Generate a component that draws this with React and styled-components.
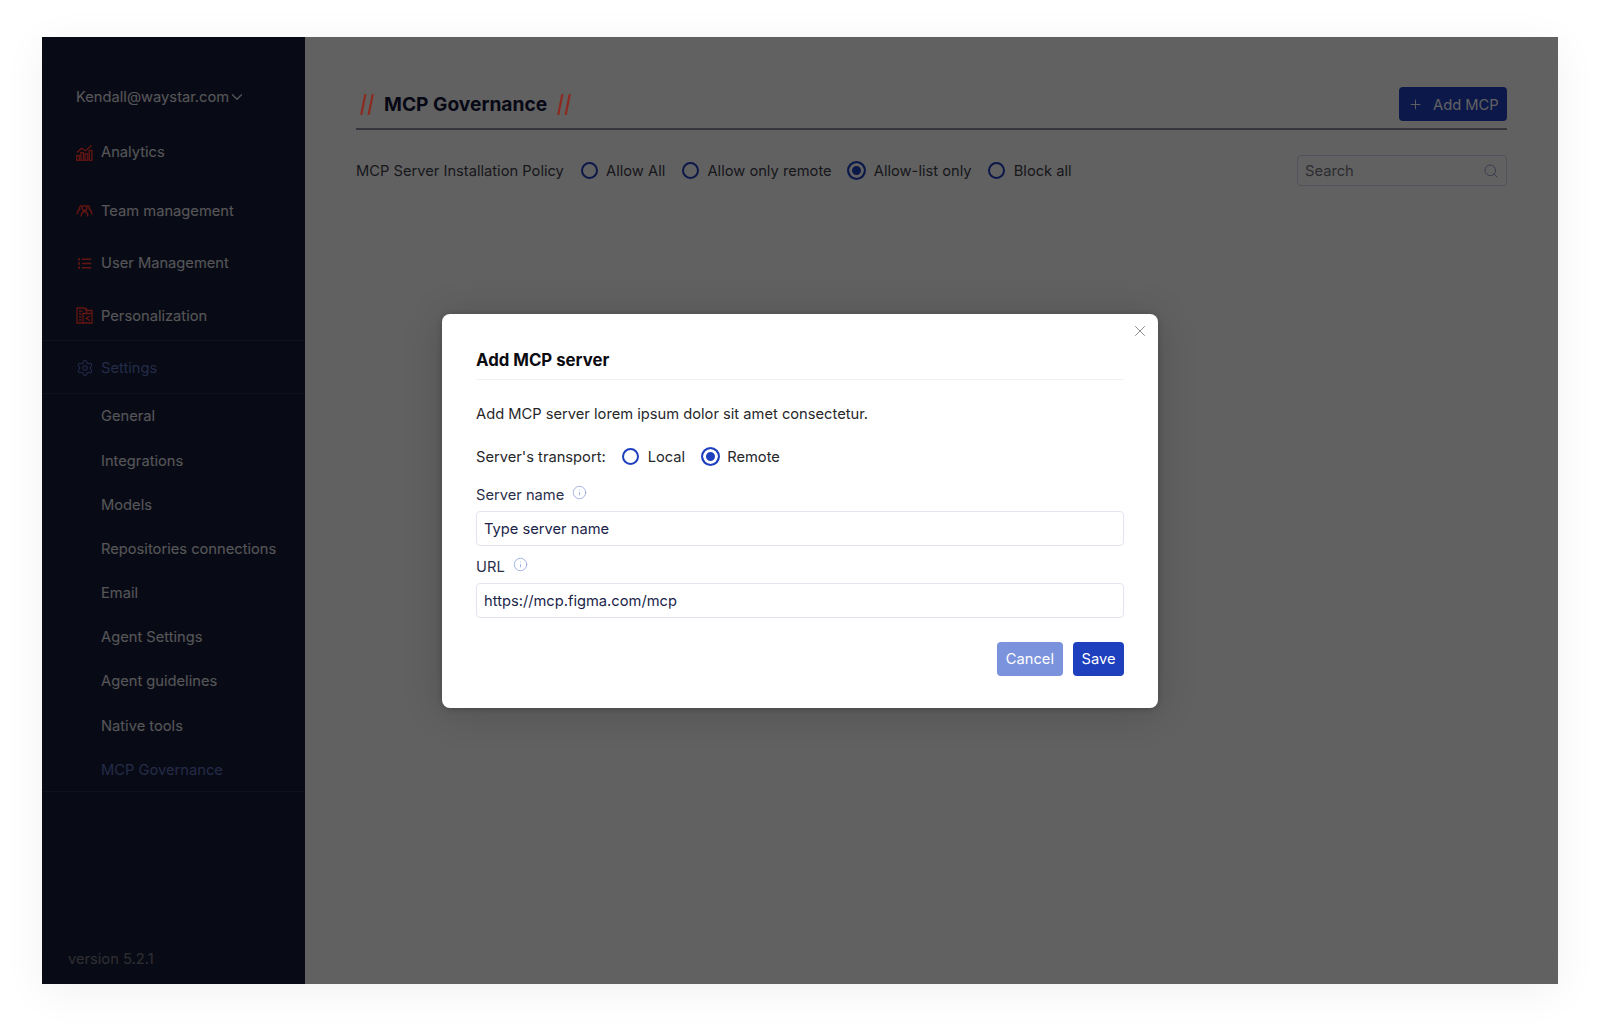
import React from 'react';
import styled, { createGlobalStyle } from 'styled-components';
import { ChevronDown, Info, Plus, Search, Settings, X } from 'lucide-react';

const GlobalStyle = createGlobalStyle`
  html, body {
    margin: 0;
    padding: 0;
    background: #fff;
  }
  body {
    font-family: Inter, "Liberation Sans", sans-serif;
    -webkit-font-smoothing: antialiased;
  }
`;

const AnalyticsIcon = () => (
  <svg width="17" height="17" viewBox="0 0 17 17" fill="none" stroke="currentColor" strokeWidth="1.3">
    <rect x="0.7" y="11.5" width="2.6" height="4.8" />
    <rect x="4.9" y="8.5" width="2.6" height="7.8" />
    <rect x="9.1" y="9.8" width="2.6" height="6.5" />
    <rect x="13.3" y="6.5" width="2.6" height="9.8" />
    <path d="M0.8 8.5 5.5 4.4 9.8 6.8 15.8 1.2" />
  </svg>
);

const TeamIcon = () => (
  <svg width="17" height="17" viewBox="0 0 17 17" fill="none" stroke="currentColor" strokeWidth="1.4">
    <circle cx="8.5" cy="6" r="2.4" />
    <path d="M5.2 14.5c0-3 1.2-5 3.3-5s3.3 2 3.3 5" />
    <path d="M6 3.6A2.2 2.2 0 0 0 3.8 6.8C2.3 7.8 1.4 10 1.1 12.5" />
    <path d="M11 3.6a2.2 2.2 0 0 1 2.2 3.2c1.5 1 2.4 3.2 2.7 5.7" />
  </svg>
);

const ListIcon = () => (
  <svg width="17" height="17" viewBox="0 0 17 17" fill="none" stroke="currentColor" strokeWidth="1.5">
    <path d="M5.8 4.3h9.4M5.8 8.5h9.4M5.8 12.7h9.4" />
    <path d="M2.2 4.3h1.8M2.2 8.5h1.8M2.2 12.7h1.8" strokeWidth="2.3" />
  </svg>
);

const PersonalizationIcon = () => (
  <svg width="17" height="17" viewBox="0 0 17 17" fill="none" stroke="currentColor" strokeWidth="1.3">
    <path d="M7 16H1V1h7.5l2 2.5V6" />
    <path d="M10.5 1v2.5h5.5V16H7V6.5h9" />
    <path d="M3 4.2h3.5M3 7h2.4M3 10h2.4M3 13h2.4" />
    <path d="M13.8 9 10 11.2l3.8 2.4" />
  </svg>
);

const SlashMark = () => (
  <svg width="14" height="21" viewBox="0 0 14 21" fill="none" stroke="currentColor" strokeWidth="2.2">
    <path d="M1.2 21 5.4 0M8.6 21 12.8 0" />
  </svg>
);

const topItems = [
  { label: 'Analytics', icon: <AnalyticsIcon />, after: 6 },
  { label: 'Team management', icon: <TeamIcon /> },
  { label: 'User Management', icon: <ListIcon /> },
  { label: 'Personalization', icon: <PersonalizationIcon /> },
];

const subItems = [
  'General',
  'Integrations',
  'Models',
  'Repositories connections',
  'Email',
  'Agent Settings',
  'Agent guidelines',
  'Native tools',
  'MCP Governance',
];

const policies = [
  { label: 'Allow All' },
  { label: 'Allow only remote' },
  { label: 'Allow-list only', checked: true },
  { label: 'Block all' },
];

const App = () => {
  return (
    <>
      <GlobalStyle />
      <Page>
        <Frame>
          <Sidebar>
            <Account>
              Kendall@waystar.com
              <ChevronDown size={18} strokeWidth={1.6} />
            </Account>
            {topItems.map(item => (
              <NavItem key={item.label} $after={item.after}>
                <NavIcon>{item.icon}</NavIcon>
                {item.label}
              </NavItem>
            ))}
            <SettingsItem>
              <NavIcon $blue>
                <Settings size={18} strokeWidth={1.4} />
              </NavIcon>
              Settings
            </SettingsItem>
            <SubList>
              {subItems.map(item => (
                <SubItem key={item} $active={item === 'MCP Governance'}>
                  {item}
                </SubItem>
              ))}
            </SubList>
            <Version>version 5.2.1</Version>
          </Sidebar>

          <Main>
            <Header>
              <TitleGroup>
                <Slashes>
                  <SlashMark />
                </Slashes>
                <Title>MCP Governance</Title>
                <Slashes>
                  <SlashMark />
                </Slashes>
              </TitleGroup>
              <AddButton>
                <Plus size={15} strokeWidth={1.5} />
                Add MCP
              </AddButton>
            </Header>
            <PolicyRow>
              <span>MCP Server Installation Policy</span>
              {policies.map(policy => (
                <RadioOption key={policy.label}>
                  <Radio $checked={policy.checked} />
                  {policy.label}
                </RadioOption>
              ))}
              <SearchBox>
                Search
                <Search size={16} strokeWidth={1.4} />
              </SearchBox>
            </PolicyRow>
          </Main>

          <Overlay>
            <Modal>
              <CloseButton>
                <X size={18} strokeWidth={1.3} />
              </CloseButton>
              <ModalTitle>Add MCP server</ModalTitle>
              <Description>Add MCP server lorem ipsum dolor sit amet consectetur.</Description>
              <TransportRow>
                <span>Server's transport:</span>
                <RadioOption>
                  <Radio />
                  Local
                </RadioOption>
                <RadioOption>
                  <Radio $checked />
                  Remote
                </RadioOption>
              </TransportRow>
              <FieldLabel>
                Server name
                <Info size={15} strokeWidth={1.3} />
              </FieldLabel>
              <Input>Type server name</Input>
              <FieldLabel>
                URL
                <Info size={15} strokeWidth={1.3} />
              </FieldLabel>
              <Input>https://mcp.figma.com/mcp</Input>
              <Actions>
                <ModalButton $light>Cancel</ModalButton>
                <ModalButton>Save</ModalButton>
              </Actions>
            </Modal>
          </Overlay>
        </Frame>
      </Page>
    </>
  );
};

const Page = styled.div`
  height: 1031px;
  padding: 37px 42px 47px;
  box-sizing: border-box;
  background: #fff;
`;

const Frame = styled.div`
  position: relative;
  display: flex;
  height: 947px;
  background: #fff;
  box-shadow: 0 8px 40px rgba(0, 0, 0, 0.06);
  overflow: hidden;
`;

const Sidebar = styled.aside`
  display: flex;
  flex-direction: column;
  flex: 0 0 263px;
  padding-top: 38px;
  box-sizing: border-box;
  background: #171c38;
  color: #e2e2e8;
  font-size: 14.7px;
`;

const Account = styled.div`
  display: flex;
  align-items: center;
  height: 44px;
  margin-bottom: 6px;
  padding-left: 34px;
  svg {
    margin-left: -1px;
  }
`;

const NavItem = styled.div`
  display: flex;
  align-items: center;
  box-sizing: border-box;
  height: 52.5px;
  margin-bottom: ${props => props.$after || 0}px;
  padding: 1.5px 0 0 34px;
`;

// the red accents keep their strength under the dimming layer
const NavIcon = styled.span`
  position: relative;
  z-index: 2;
  display: flex;
  align-items: center;
  flex: 0 0 25px;
  color: ${props => (props.$blue ? '#232b4a' : '#651612')};
`;

const SettingsItem = styled(NavItem)`
  height: 54px;
  margin-top: -1px;
  border-top: 1px solid #2c3149;
  border-bottom: 1px solid #2c3149;
  color: #5d72bc;
`;

const SubList = styled.div`
  margin-top: -0.5px;
  border-bottom: 1px solid #2c3149;
`;

const SubItem = styled.div`
  display: flex;
  align-items: center;
  box-sizing: border-box;
  height: 44.2px;
  padding: 1.5px 0 0 59px;
  color: ${props => (props.$active ? '#5d72bc' : 'inherit')};
`;

const Version = styled.div`
  margin-top: auto;
  padding: 0 0 16px 26px;
  color: #7d7d84;
`;

const Main = styled.main`
  flex: 1;
  padding: 50px 51px 0 51px;
  background: #fff;
`;

const Header = styled.div`
  display: flex;
  align-items: center;
  justify-content: space-between;
  height: 34px;
  padding-bottom: 7px;
  border-bottom: 2px solid #8d8da3;
`;

const TitleGroup = styled.div`
  display: flex;
  align-items: center;
  gap: 10px;
  padding-left: 4px;
`;

const Slashes = styled.span`
  position: relative;
  z-index: 2;
  display: flex;
  color: #8c2a20;
`;

const Title = styled.h1`
  margin: 0;
  color: #14173a;
  font-size: 19.2px;
  font-weight: 700;
`;

const AddButton = styled.div`
  display: flex;
  align-items: center;
  gap: 10px;
  box-sizing: border-box;
  width: 108px;
  height: 34px;
  padding: 1px 0 0 9px;
  border-radius: 4px;
  background: #1e40bf;
  color: #fff;
  font-size: 14.7px;
`;

const PolicyRow = styled.div`
  display: flex;
  align-items: center;
  gap: 16.7px;
  margin-top: 25px;
  color: #40404a;
  font-size: 14.7px;
`;

const RadioOption = styled.label`
  display: flex;
  align-items: center;
  gap: 8.5px;
`;

const Radio = styled.span`
  box-sizing: border-box;
  width: ${props => (props.$checked ? 19 : 17)}px;
  height: ${props => (props.$checked ? 19 : 17)}px;
  margin: ${props => (props.$checked ? -1 : 0)}px;
  border: 2px solid #1e40bf;
  border-radius: 50%;
  background: ${props => (props.$checked ? '#1e40bf' : 'transparent')};
  box-shadow: ${props => (props.$checked ? 'inset 0 0 0 3px #fff' : 'none')};
`;

const SearchBox = styled.div`
  display: flex;
  align-items: center;
  justify-content: space-between;
  box-sizing: border-box;
  width: 210px;
  height: 31px;
  margin-left: auto;
  padding: 0 7px;
  border: 1px solid #d5d9ec;
  border-radius: 4px;
  color: #76767e;
  svg {
    color: #8b98c9;
  }
`;

const Overlay = styled.div`
  position: absolute;
  inset: 0;
  z-index: 1;
  display: flex;
  align-items: center;
  justify-content: center;
  background: rgba(0, 0, 0, 0.62);
`;

const Modal = styled.div`
  position: relative;
  box-sizing: border-box;
  width: 716px;
  height: 394px;
  padding: 34px 34px 30px;
  border-radius: 8px;
  background: #fff;
  color: #27272a;
  font-size: 14.7px;
  box-shadow: 0 4px 40px rgba(0, 0, 0, 0.16), 0 1px 6px rgba(0, 0, 0, 0.2);
`;

const CloseButton = styled.div`
  position: absolute;
  top: 8px;
  right: 9px;
  display: flex;
  color: #8a8a8a;
`;

const ModalTitle = styled.h2`
  margin: 0 0 22.5px;
  padding-bottom: 7px;
  border-bottom: 1.5px solid #f1f1f6;
  color: #0b0b12;
  font-size: 16.8px;
  font-weight: 700;
  line-height: 24px;
`;

const Description = styled.div`
  height: 24px;
  line-height: 24px;
`;

const TransportRow = styled.div`
  display: flex;
  align-items: center;
  gap: 16.5px;
  height: 24px;
  margin-top: 18.5px;
  margin-bottom: 14px;
`;

const FieldLabel = styled.div`
  display: flex;
  align-items: center;
  gap: 8px;
  height: 24px;
  margin-top: 9px;
  color: #2b2f4a;
  svg {
    margin-top: -4px;
    color: #93a3dd;
  }
`;

const Input = styled.div`
  display: flex;
  align-items: center;
  box-sizing: border-box;
  height: 35px;
  margin-top: 4px;
  padding: 2px 0 0 7px;
  border: 1px solid #e4e4ee;
  border-radius: 4px;
  color: #1b1f4a;
`;

const Actions = styled.div`
  display: flex;
  justify-content: flex-end;
  gap: 10.5px;
  margin-top: 24px;
`;

const ModalButton = styled.div`
  display: flex;
  align-items: center;
  height: 34px;
  padding: 0 8.5px;
  border-radius: 4px;
  background: ${props => (props.$light ? '#7b92dc' : '#1e40bf')};
  color: #fff;
`;

export default App;
